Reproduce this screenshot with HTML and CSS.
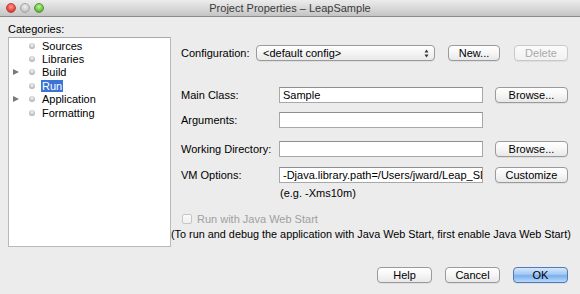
FILE: index.html
```html
<!DOCTYPE html>
<html>
<head>
<meta charset="utf-8">
<link rel="stylesheet" href="styles.css">
</head>
<body>
<div class="window">
  <div class="titlebar">
    <div class="lights">
      <span class="light red"></span>
      <span class="light grey"></span>
      <span class="light green"></span>
    </div>
    <div class="title">Project Properties – LeapSample</div>
    <div></div>
  </div>
  <div class="main">
    <div class="left">
      <div class="cat-label">Categories:</div>
      <div class="tree">
        <div class="node"><span class="arrow"></span><span class="bullet"></span><span class="name">Sources</span></div>
        <div class="node"><span class="arrow"></span><span class="bullet"></span><span class="name">Libraries</span></div>
        <div class="node"><span class="arrow on"></span><span class="bullet"></span><span class="name">Build</span></div>
        <div class="node"><span class="arrow"></span><span class="bullet"></span><span class="name sel">Run</span></div>
        <div class="node"><span class="arrow on"></span><span class="bullet"></span><span class="name">Application</span></div>
        <div class="node"><span class="arrow"></span><span class="bullet"></span><span class="name">Formatting</span></div>
      </div>
    </div>
    <div class="right">
      <div class="row config-row">
        <span class="cfg-label">Configuration:</span>
        <div class="combo"><span>&lt;default config&gt;</span>
          <svg class="updown" width="5" height="9" viewBox="0 0 5 9"><path d="M2.5 0.5 L4.5 3.5 L0.5 3.5 Z M2.5 8.5 L4.5 5.5 L0.5 5.5 Z" fill="#333"/></svg>
        </div>
        <button class="btn new">New...</button>
        <button class="btn del" disabled>Delete</button>
      </div>
      <div class="row r-main">
        <span class="flabel">Main Class:</span>
        <div class="field">Sample</div>
        <button class="btn side">Browse...</button>
      </div>
      <div class="row r-args">
        <span class="flabel">Arguments:</span>
        <div class="field"></div>
      </div>
      <div class="row r-wd">
        <span class="flabel">Working Directory:</span>
        <div class="field"></div>
        <button class="btn side">Browse...</button>
      </div>
      <div class="row r-vm">
        <span class="flabel">VM Options:</span>
        <div class="field">-Djava.library.path=/Users/jward/Leap_SDK/lib</div>
        <button class="btn side">Customize</button>
      </div>
      <div class="hint">(e.g. -Xms10m)</div>
      <div class="check-row">
        <span class="checkbox"></span>
        <span class="check-label">Run with Java Web Start</span>
      </div>
      <div class="note">(To run and debug the application with Java Web Start, first enable Java Web Start)</div>
    </div>
  </div>
  <div class="footer">
    <button class="btn foot">Help</button>
    <button class="btn foot">Cancel</button>
    <button class="btn foot ok">OK</button>
  </div>
</div>
</body>
</html>
```

FILE: styles.css
```css
* { box-sizing: border-box; }
html, body { margin: 0; padding: 0; }
body {
  font-family: "Liberation Sans", Arial, sans-serif;
  font-size: 11px;
  color: #000;
  background: #ececec;
}
.window {
  width: 580px;
  height: 294px;
  background: #ececec;
  display: flex;
  flex-direction: column;
  overflow: hidden;
}
.titlebar {
  height: 17px;
  flex: none;
  border-bottom: 1px solid #8c8c8c;
  background: linear-gradient(#ececec, #d9d9d9 50%, #c4c4c4);
  display: grid;
  grid-template-columns: 1fr auto 1fr;
  align-items: center;
}
.lights {
  display: flex;
  gap: 4px;
  padding-left: 6px;
}
.light {
  width: 10px;
  height: 10px;
  border-radius: 50%;
  display: block;
}
.red { background: radial-gradient(circle at 50% 35%, #ff9e96 0%, #ec4b41 55%, #b52a22 100%); border: 1px solid #b7453d; }
.grey { background: radial-gradient(circle at 50% 35%, #f0f0f0 0%, #cdcdcd 55%, #a8a8a8 100%); border: 1px solid #a4a4a4; }
.green { background: radial-gradient(circle at 50% 35%, #c9f0a3 0%, #72c545 55%, #3f9a1f 100%); border: 1px solid #4f9a35; }
.title {
  font-size: 11px;
  color: #3a3a3a;
  line-height: 16px;
}
.main {
  flex: 1;
  display: flex;
}
.left {
  width: 171px;
  padding: 6px 0 0 8px;
}
.cat-label {
  line-height: 13px;
}
.tree {
  margin-top: 1px;
  width: 163px;
  height: 210px;
  background: #fff;
  border: 1px solid #b9b9b9;
  border-top-color: #a9a9a9;
  padding-top: 1px;
}
.node {
  height: 13.4px;
  display: flex;
  align-items: center;
}
.arrow {
  width: 6px;
  height: 7px;
  margin-left: 4px;
}
.arrow.on {
  width: 0;
  height: 0;
  border-left: 6px solid #7a7a7a;
  border-top: 3.5px solid transparent;
  border-bottom: 3.5px solid transparent;
}
.bullet {
  width: 6px;
  height: 6px;
  border-radius: 50%;
  margin-left: 10px;
  background: radial-gradient(circle at 50% 35%, #f4f4f4, #b4b4b4 70%, #9a9a9a);
}
.name {
  margin-left: 6px;
  padding: 0 1px;
  line-height: 12px;
}
.name.sel {
  background: #3b74d7;
  color: #fff;
}
.right {
  flex: 1;
  padding: 28px 0 0 10px;
}
.row {
  display: flex;
  align-items: center;
  height: 16px;
}
.cfg-label {
  width: 75px;
}
.combo {
  width: 179px;
  height: 16px;
  border: 1px solid #9a9a9a;
  border-radius: 4px;
  background: linear-gradient(#ffffff, #f4f4f4 50%, #e9e9e9);
  display: flex;
  align-items: center;
  justify-content: space-between;
  padding: 0 5px 0 6px;
  box-shadow: 0 1px 0 rgba(0,0,0,0.06);
}
.updown { display: block; }
.btn {
  font-family: "Liberation Sans", Arial, sans-serif;
  font-size: 11px;
  color: #000;
  height: 16px;
  padding: 0;
  border: 1px solid #9a9a9a;
  border-radius: 4px;
  background: linear-gradient(#ffffff, #f6f6f6 50%, #e8e8e8);
  box-shadow: 0 1px 0 rgba(0,0,0,0.06);
  line-height: 14px;
  text-align: center;
}
.new { width: 52px; margin-left: 13px; }
.del { width: 54px; margin-left: 14px; color: #a9a9a9; border-color: #c9c9c9; background: linear-gradient(#fbfbfb, #f1f1f1); }
.flabel { width: 98px; }
.field {
  width: 204px;
  height: 16px;
  background: #fff;
  border: 1px solid #a8a8a8;
  border-top-color: #8e8e8e;
  padding-left: 3px;
  line-height: 14px;
  white-space: nowrap;
  overflow: hidden;
}
.side { width: 73px; margin-left: 12px; }
.r-main { margin-top: 26px; }
.r-args { margin-top: 9px; }
.r-wd { margin-top: 13px; }
.r-vm { margin-top: 10px; }
.hint {
  margin-top: 4px;
  padding-left: 99px;
  line-height: 12px;
}
.check-row {
  margin-top: 13px;
  display: flex;
  align-items: center;
  height: 13px;
}
.checkbox {
  width: 10px;
  height: 10px;
  margin-left: 1px;
  border: 1px solid #c6c6c6;
  border-radius: 2px;
  background: linear-gradient(#fafafa, #f0f0f0);
}
.check-label {
  margin-left: 5px;
  color: #a0a0a0;
}
.note {
  margin-top: 3px;
  margin-left: -10px;
  line-height: 13px;
  font-size: 10.85px;
  white-space: nowrap;
}
.footer {
  flex: none;
  display: flex;
  justify-content: flex-end;
  gap: 13px;
  padding: 0 12px 11px 0;
}
.foot { width: 55px; }
.ok {
  border-color: #5079b6;
  background: linear-gradient(#d6e8fc, #a1c8f3 45%, #78b0ef 55%, #b7dafb);
}
```
